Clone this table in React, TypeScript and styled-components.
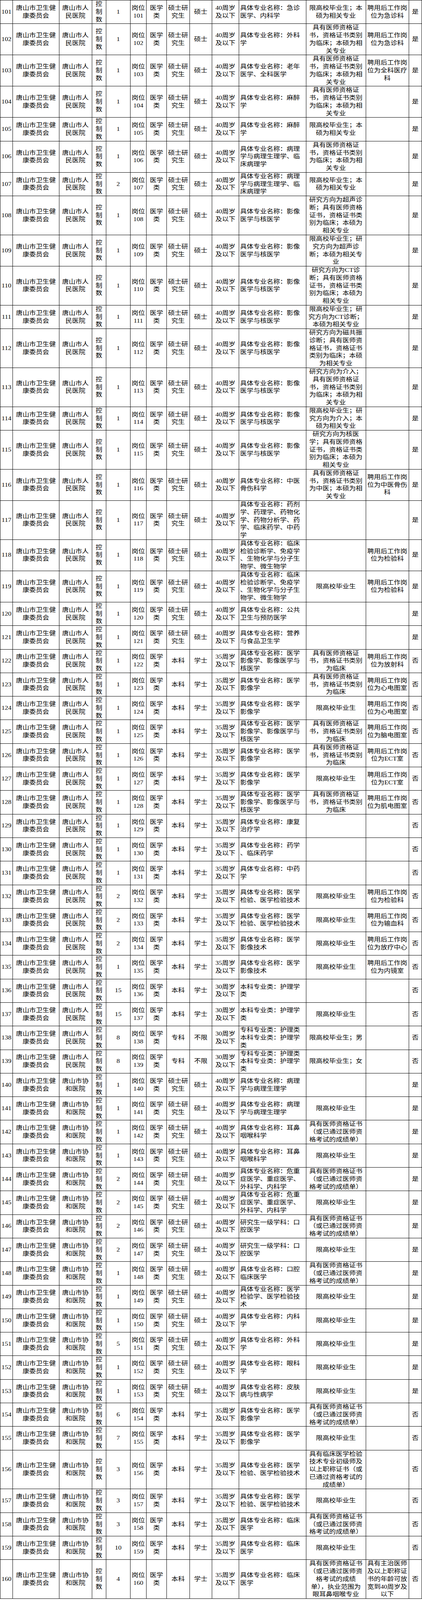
import { createGlobalStyle, styled } from "styled-components";

const GlobalStyle = createGlobalStyle`
	html, body {
		margin: 0;
		padding: 0;
		background: #fff;
	}
`

const widths = [33, 118.5, 84, 36.5, 62, 41, 52, 58.5, 57.5, 68.5, 172, 153, 110, 33.5];

const LINE = 19.77;

const Sheet = styled.div`
	display: grid;
	grid-template-columns: ${widths.map((w) => `${w}px`).join(" ")};
	width: 1080px;
	box-sizing: border-box;
	border-top: 1px solid #000;
	font-family: "Liberation Serif", "Noto Sans CJK SC", serif;
	font-size: 17px;
	color: #000;
`

const Cell = styled.div<{ $left?: boolean; $first?: boolean }>`
	display: flex;
	flex-direction: column;
	justify-content: center;
	align-items: ${(p) => (p.$left ? "flex-start" : "center")};
	padding-left: ${(p) => (p.$left ? "3px" : "0")};
	border-left: ${(p) => (p.$first ? "1px solid #000" : "none")};
	border-right: 1px solid #000;
	border-bottom: 1px solid #000;
	overflow: hidden;
`

// one printed line of a cell; fixed height so mixed fonts can't grow the row
const Line = styled.div`
	height: ${LINE}px;
	line-height: ${LINE}px;
	white-space: pre;
	transform: scaleY(0.88);
`

type Row = { n: number; c: number; major: string; other?: string; note?: string };

// shared texts
const LIN4 = "具有医师资格证\n书，资格证书类别\n为临床；本硕为相\n关专业";
const LIN3 = "具有医师资格证\n书，资格证书类别\n为临床";
const XB = "限高校毕业生；本\n硕为相关专业";
const GX = "限高校毕业生";
const YS = "具有医师资格证书\n（或已通过医师资\n格考试的成绩单）";
const YX = "具体专业名称：影像\n医学与核医学";
const BL = "具体专业名称：病理\n学与病理生理学、临\n床病理学";
const JY = "具体专业名称：临床\n检验诊断学、免疫学\n、生物化学与分子生\n物学、微生物学";
const YXX3 = "具体专业名称：医学\n影像学、影像医学与\n核医学";
const YXX = "具体专业名称：医学\n影像学";
const JYJS = "具体专业名称：医学\n检验、医学检验技术";
const job = (s: string) => `聘用后工作岗\n位为${s}`;

const rows: Row[] = [
	{ n: 101, c: 1, major: "具体专业名称：急诊\n医学、内科学", other: XB, note: job("急诊科") },
	{ n: 102, c: 1, major: "具体专业名称：外科\n学", other: LIN4, note: job("急诊科") },
	{ n: 103, c: 1, major: "具体专业名称：老年\n医学、全科医学", other: LIN4, note: job("全科医疗\n科") },
	{ n: 104, c: 1, major: "具体专业名称：麻醉\n学", other: LIN4 },
	{ n: 105, c: 1, major: "具体专业名称：麻醉\n学", other: XB },
	{ n: 106, c: 1, major: BL, other: LIN4 },
	{ n: 107, c: 2, major: BL, other: XB },
	{ n: 108, c: 1, major: YX, other: "研究方向为超声诊\n断；具有医师资格\n证书，资格证书类\n别为临床；本硕为\n相关专业" },
	{ n: 109, c: 1, major: YX, other: "限高校毕业生；研\n究方向为超声诊\n断；本硕为相关专\n业" },
	{ n: 110, c: 1, major: YX, other: "研究方向为CT诊\n断；具有医师资格\n证书，资格证书类\n别为临床；本硕为\n相关专业" },
	{ n: 111, c: 1, major: YX, other: "限高校毕业生；研\n究方向为CT诊断；\n本硕为相关专业" },
	{ n: 112, c: 1, major: YX, other: "研究方向为磁共振\n诊断；具有医师资\n格证书，资格证书\n类别为临床；本硕\n为相关专业" },
	{ n: 113, c: 1, major: YX, other: "研究方向为介入；\n具有医师资格证\n书，资格证书类别\n为临床；本硕为相\n关专业" },
	{ n: 114, c: 1, major: YX, other: "限高校毕业生；研\n究方向为介入；本\n硕为相关专业" },
	{ n: 115, c: 1, major: YX, other: "研究方向为核医\n学；具有医师资格\n证书，资格证书类\n别为临床；本硕为\n相关专业" },
	{ n: 116, c: 1, major: "具体专业名称：中医\n骨伤科学", other: "具有医师资格证\n书，资格证书类别\n为中医；本硕为相\n关专业", note: job("中医骨伤\n科") },
	{ n: 117, c: 1, major: "具体专业名称：药剂\n学、药理学、药物化\n学、药物分析学、药\n学、临床药学、中药\n学" },
	{ n: 118, c: 1, major: JY, note: job("检验科") },
	{ n: 119, c: 1, major: JY, other: GX, note: job("检验科") },
	{ n: 120, c: 1, major: "具体专业名称：公共\n卫生与预防医学" },
	{ n: 121, c: 1, major: "具体专业名称：营养\n与食品卫生学" },
	{ n: 122, c: 1, major: YXX3, other: LIN3, note: job("放射科") },
	{ n: 123, c: 1, major: YXX, other: LIN3, note: job("心电图室") },
	{ n: 124, c: 1, major: YXX, other: GX, note: job("心电图室") },
	{ n: 125, c: 1, major: YXX3, other: LIN3, note: job("脑电图室") },
	{ n: 126, c: 1, major: YXX, other: LIN3, note: job("ECT室") },
	{ n: 127, c: 1, major: YXX, other: GX, note: job("ECT室") },
	{ n: 128, c: 1, major: YXX3, other: LIN3, note: job("肌电图室") },
	{ n: 129, c: 1, major: "具体专业名称：康复\n治疗学" },
	{ n: 130, c: 1, major: "具体专业名称：药学\n、临床药学" },
	{ n: 131, c: 1, major: "具体专业名称：中药\n学" },
	{ n: 132, c: 2, major: JYJS, other: GX, note: job("检验科") },
	{ n: 133, c: 2, major: JYJS, other: GX, note: job("输血科") },
	{ n: 134, c: 2, major: "具体专业名称：医学\n影像技术", other: GX, note: job("放疗中心") },
	{ n: 135, c: 1, major: "具体专业名称：医学\n影像技术", other: GX, note: job("内镜室") },
	{ n: 136, c: 15, major: "本科专业类：护理学\n类" },
	{ n: 137, c: 15, major: "本科专业类：护理学\n类", other: GX },
	{ n: 138, c: 8, major: "专科专业类：护理类\n本科专业类：护理学\n类", other: "限高校毕业生；男" },
	{ n: 139, c: 8, major: "专科专业类：护理类\n本科专业类：护理学\n类", other: "限高校毕业生；女" },
	{ n: 140, c: 1, major: "具体专业名称：病理\n学与病理生理学" },
	{ n: 141, c: 1, major: "具体专业名称：病理\n学与病理生理学", other: GX },
	{ n: 142, c: 1, major: "具体专业名称：耳鼻\n咽喉科学", other: YS },
	{ n: 143, c: 1, major: "具体专业名称：耳鼻\n咽喉科学", other: GX },
	{ n: 144, c: 2, major: "具体专业名称：危重\n症医学、重症医学、\n外科学、内科学", other: YS },
	{ n: 145, c: 2, major: "具体专业名称：危重\n症医学、重症医学、\n外科学、内科学", other: GX },
	{ n: 146, c: 2, major: "研究生一级学科：口\n腔医学", other: YS },
	{ n: 147, c: 2, major: "研究生一级学科：口\n腔医学", other: GX },
	{ n: 148, c: 1, major: "具体专业名称：口腔\n临床医学", other: YS },
	{ n: 149, c: 1, major: "具体专业名称：医学\n检验学、医学检验技\n术", other: GX },
	{ n: 150, c: 1, major: "具体专业名称：内科\n学", other: GX },
	{ n: 151, c: 5, major: "具体专业名称：外科\n学", other: GX },
	{ n: 152, c: 1, major: "具体专业名称：眼科\n学", other: GX },
	{ n: 153, c: 1, major: "具体专业名称：皮肤\n病与性病学", other: GX },
	{ n: 154, c: 6, major: YXX, other: YS },
	{ n: 155, c: 7, major: YXX, other: GX },
	{ n: 156, c: 3, major: JYJS, other: "具有临床医学检验\n技术专业初级师及\n以上职称证书（或\n已通过资格考试的\n成绩单）" },
	{ n: 157, c: 3, major: JYJS, other: GX },
	{ n: 158, c: 3, major: "具体专业名称：临床\n医学", other: YS },
	{ n: 159, c: 10, major: "具体专业名称：临床\n医学", other: GX },
	{ n: 160, c: 4, major: "具体专业名称：临床\n医学", other: "具有医师资格证书\n（或已通过医师资\n格考试的成绩\n单），执业范围为\n眼耳鼻咽喉专业", note: "具有主治医师\n及以上职称证\n书的年龄可放\n宽到40周岁及\n以下" },
];

function meta(n: number) {
	const master = n <= 121 || (n >= 140 && n <= 153);
	if (master) return { edu: "硕士研\n究生", deg: "硕士", age: 40, flag: "是" };
	if (n === 138 || n === 139) return { edu: "专科", deg: "不限", age: 30, flag: "否" };
	const age = n === 136 || n === 137 ? 30 : 35;
	return { edu: "本科", deg: "学士", age, flag: "否" };
}

function Lines({ text }: { text: string | number | undefined }) {
	if (text === undefined || text === "") return null;
	return (
		<>
			{String(text).split("\n").map((t, i) => (
				<Line key={i}>{t}</Line>
			))}
		</>
	)
}

export default function App() {
	return (
		<>
			<GlobalStyle />
			<Sheet>
				{rows.map((r) => {
					const m = meta(r.n);
					return [
						<Cell key={`${r.n}a`} $first><Lines text={r.n} /></Cell>,
						<Cell key={`${r.n}b`}><Lines text={"唐山市卫生健\n康委员会"} /></Cell>,
						<Cell key={`${r.n}c`}><Lines text={r.n >= 140 ? "唐山市协\n和医院" : "唐山市人\n民医院"} /></Cell>,
						<Cell key={`${r.n}d`}><Lines text={"控\n制\n数"} /></Cell>,
						<Cell key={`${r.n}e`}><Lines text={r.c} /></Cell>,
						<Cell key={`${r.n}f`}><Lines text={`岗位\n${r.n}`} /></Cell>,
						<Cell key={`${r.n}g`}><Lines text={"医学\n类"} /></Cell>,
						<Cell key={`${r.n}h`}><Lines text={m.edu} /></Cell>,
						<Cell key={`${r.n}i`}><Lines text={m.deg} /></Cell>,
						<Cell key={`${r.n}j`}><Lines text={`${m.age}周岁\n及以下`} /></Cell>,
						<Cell key={`${r.n}k`} $left><Lines text={r.major} /></Cell>,
						<Cell key={`${r.n}l`}><Lines text={r.other} /></Cell>,
						<Cell key={`${r.n}m`}><Lines text={r.note} /></Cell>,
						<Cell key={`${r.n}n`}><Lines text={m.flag} /></Cell>,
					];
				})}
			</Sheet>
		</>
	)
}
